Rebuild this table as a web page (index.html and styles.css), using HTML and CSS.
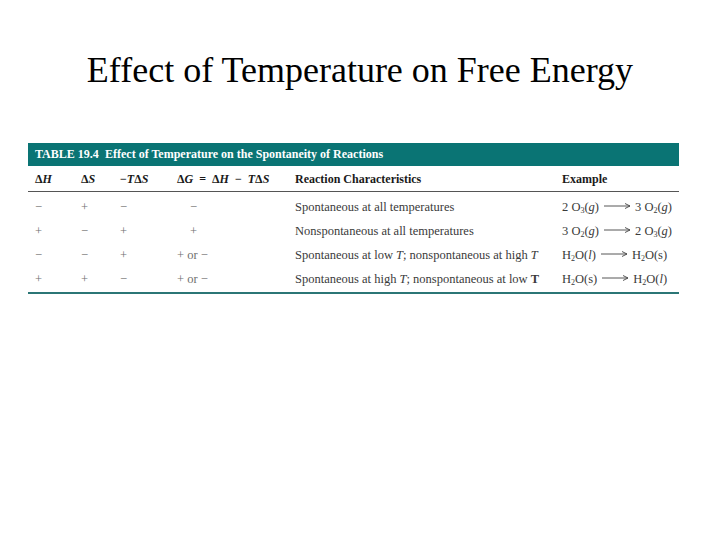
FILE: index.html
```html
<!DOCTYPE html>
<html>
<head>
<meta charset="utf-8">
<link rel="stylesheet" href="styles.css">
</head>
<body>
<h1 class="title">Effect of Temperature on Free Energy</h1>
<div class="table">
  <div class="caption"><span class="tag">TABLE 19.4</span><span>Effect of Temperature on the Spontaneity of Reactions</span></div>
  <div class="row head">
    <div>Δ<i>H</i></div>
    <div>Δ<i>S</i></div>
    <div>−<i>T</i>Δ<i>S</i></div>
    <div>Δ<i>G</i><span class="op">=</span>Δ<i>H</i><span class="op">−</span><i>T</i>Δ<i>S</i></div>
    <div>Reaction Characteristics</div>
    <div>Example</div>
  </div>
  <div class="row">
    <div class="sign">−</div><div class="sign">+</div><div class="sign">−</div><div class="sign single">−</div>
    <div>Spontaneous at all temperatures</div>
    <div>2 O<sub>3</sub>(<i>g</i>)<svg class="arr" width="34" height="8" viewBox="0 0 34 8"><path d="M4 4H30M25 1.5L30 4L25 6.5" fill="none" stroke="#444" stroke-width="0.9"/></svg>3 O<sub>2</sub>(<i>g</i>)</div>
  </div>
  <div class="row">
    <div class="sign">+</div><div class="sign">−</div><div class="sign">+</div><div class="sign single">+</div>
    <div>Nonspontaneous at all temperatures</div>
    <div>3 O<sub>2</sub>(<i>g</i>)<svg class="arr" width="34" height="8" viewBox="0 0 34 8"><path d="M4 4H30M25 1.5L30 4L25 6.5" fill="none" stroke="#444" stroke-width="0.9"/></svg>2 O<sub>3</sub>(<i>g</i>)</div>
  </div>
  <div class="row">
    <div class="sign">−</div><div class="sign">−</div><div class="sign">+</div><div class="sign">+ or −</div>
    <div>Spontaneous at low <i>T</i>; nonspontaneous at high <i>T</i></div>
    <div>H<sub>2</sub>O(<i>l</i>)<svg class="arr" width="34" height="8" viewBox="0 0 34 8"><path d="M4 4H30M25 1.5L30 4L25 6.5" fill="none" stroke="#444" stroke-width="0.9"/></svg>H<sub>2</sub>O(s)</div>
  </div>
  <div class="row">
    <div class="sign">+</div><div class="sign">+</div><div class="sign">−</div><div class="sign">+ or −</div>
    <div>Spontaneous at high <i>T</i>; nonspontaneous at low <b>T</b></div>
    <div>H<sub>2</sub>O(s)<svg class="arr" width="34" height="8" viewBox="0 0 34 8"><path d="M4 4H30M25 1.5L30 4L25 6.5" fill="none" stroke="#444" stroke-width="0.9"/></svg>H<sub>2</sub>O(<i>l</i>)</div>
  </div>
  <div class="bottom"></div>
</div>
</body>
</html>
```
FILE: styles.css
```css
html, body {
  margin: 0;
  padding: 0;
  background: #ffffff;
}
body {
  width: 720px;
  height: 540px;
  overflow: hidden;
}
.title {
  margin: 0;
  padding-top: 48px;
  font-family: "Liberation Serif", serif;
  font-weight: normal;
  font-size: 36px;
  line-height: 44px;
  text-align: center;
  color: #000;
}
.table {
  margin: 51px 0 0 28px;
  width: 651px;
  font-family: "Liberation Serif", serif;
  font-size: 12px;
}
.caption {
  background: #0a7474;
  color: #fff;
  font-weight: bold;
  height: 23px;
  display: flex;
  align-items: center;
  padding-left: 7px;
}
.caption .tag {
  width: 70px;
}
.row {
  display: grid;
  grid-template-columns: 46px 39px 57px 118px 267px 1fr;
  padding-left: 7px;
  height: 24px;
  align-items: center;
  color: #3a3a3a;
  font-size: 12.5px;
}
.row.head {
  font-size: 12px;
  height: 24px;
  margin-top: 1px;
  border-bottom: 1px solid #555;
  color: #1a1a1a;
  font-weight: bold;
}
.op {
  margin: 0 6px;
}
.row.head + .row {
  margin-top: 3px;
}
.sign {
  color: #707070;
}
.single {
  padding-left: 13px;
}
sub {
  font-size: 8px;
  vertical-align: -2px;
  line-height: 0;
}
.arr {
  vertical-align: 1px;
  margin: 0 1px;
}
.bottom {
  height: 2px;
  background: #2b7676;
  margin-top: 1px;
}
```
